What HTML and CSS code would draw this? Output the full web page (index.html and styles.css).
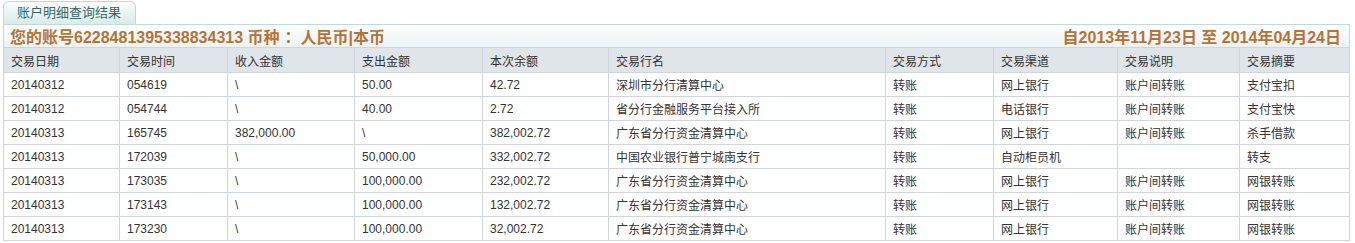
FILE: index.html
```html
<!DOCTYPE html>
<html>
<head>
<meta charset="utf-8">
<link rel="stylesheet" href="styles.css">
</head>
<body>
<div class="wrap">
  <div class="tabs"><div class="tab">账户明细查询结果</div></div>
  <div class="titlebar">
    <span class="acct">您的账号6228481395338834313 币种<span class="colon">：</span>人民币|本币</span>
    <span class="range">自2013年11月23日 至 2014年04月24日</span>
  </div>
  <table class="grid">
    <colgroup>
      <col style="width:116px"><col style="width:108px"><col style="width:127px"><col style="width:128px"><col style="width:126px"><col style="width:277px"><col style="width:108px"><col style="width:124px"><col style="width:122px"><col>
    </colgroup>
    <thead>
      <tr><th>交易日期</th><th>交易时间</th><th>收入金额</th><th>支出金额</th><th>本次余额</th><th>交易行名</th><th>交易方式</th><th>交易渠道</th><th>交易说明</th><th>交易摘要</th></tr>
    </thead>
    <tbody>
      <tr><td>20140312</td><td>054619</td><td>\</td><td>50.00</td><td>42.72</td><td>深圳市分行清算中心</td><td>转账</td><td>网上银行</td><td>账户间转账</td><td>支付宝扣</td></tr>
      <tr><td>20140312</td><td>054744</td><td>\</td><td>40.00</td><td>2.72</td><td>省分行金融服务平台接入所</td><td>转账</td><td>电话银行</td><td>账户间转账</td><td>支付宝快</td></tr>
      <tr><td>20140313</td><td>165745</td><td>382,000.00</td><td>\</td><td>382,002.72</td><td>广东省分行资金清算中心</td><td>转账</td><td>网上银行</td><td>账户间转账</td><td>杀手借款</td></tr>
      <tr><td>20140313</td><td>172039</td><td>\</td><td>50,000.00</td><td>332,002.72</td><td>中国农业银行普宁城南支行</td><td>转账</td><td>自动柜员机</td><td></td><td>转支</td></tr>
      <tr><td>20140313</td><td>173035</td><td>\</td><td>100,000.00</td><td>232,002.72</td><td>广东省分行资金清算中心</td><td>转账</td><td>网上银行</td><td>账户间转账</td><td>网银转账</td></tr>
      <tr><td>20140313</td><td>173143</td><td>\</td><td>100,000.00</td><td>132,002.72</td><td>广东省分行资金清算中心</td><td>转账</td><td>网上银行</td><td>账户间转账</td><td>网银转账</td></tr>
      <tr><td>20140313</td><td>173230</td><td>\</td><td>100,000.00</td><td>32,002.72</td><td>广东省分行资金清算中心</td><td>转账</td><td>网上银行</td><td>账户间转账</td><td>网银转账</td></tr>
    </tbody>
  </table>
</div>
</body>
</html>
```

FILE: styles.css
```css
html, body {
  margin: 0;
  padding: 0;
  background: #ffffff;
}
body {
  font-family: "Liberation Sans", Arial, "Noto Sans CJK SC", sans-serif;
  font-size: 12px;
  color: #333333;
}
.wrap {
  margin-left: 3px;
  width: 1347px;
}
.tabs {
  height: 24px;
  padding-top: 1px;
  box-sizing: border-box;
  display: flex;
  align-items: flex-end;
}
.tab {
  width: 133px;
  height: 23px;
  box-sizing: border-box;
  border: 1px solid #bcd9d4;
  border-bottom: none;
  border-radius: 6px 6px 0 0;
  background: linear-gradient(#fbfdfd, #d7ece8);
  color: #3b6865;
  font-size: 13px;
  line-height: 22px;
  padding-left: 13px;
}
.titlebar {
  height: 23px;
  box-sizing: border-box;
  border: 1px solid #c3d7df;
  border-bottom: none;
  background: linear-gradient(#ffffff, #e9f3f6);
  display: flex;
  justify-content: space-between;
  align-items: center;
  padding: 0 8px 0 6px;
  font-size: 16px;
  font-weight: bold;
  color: #b87333;
}
.colon {
  padding-left: 5px;
}
.grid {
  border-collapse: collapse;
  table-layout: fixed;
  width: 1347px;
}
.grid th, .grid td {
  border: 1px solid #cfd5d8;
  height: 23px;
  padding: 0 0 0 7px;
  text-align: left;
  white-space: nowrap;
  overflow: hidden;
  font-size: 12px;
}
.grid th {
  background: #dfe5e8;
  font-weight: normal;
  color: #333333;
  height: 24px;
}
```
